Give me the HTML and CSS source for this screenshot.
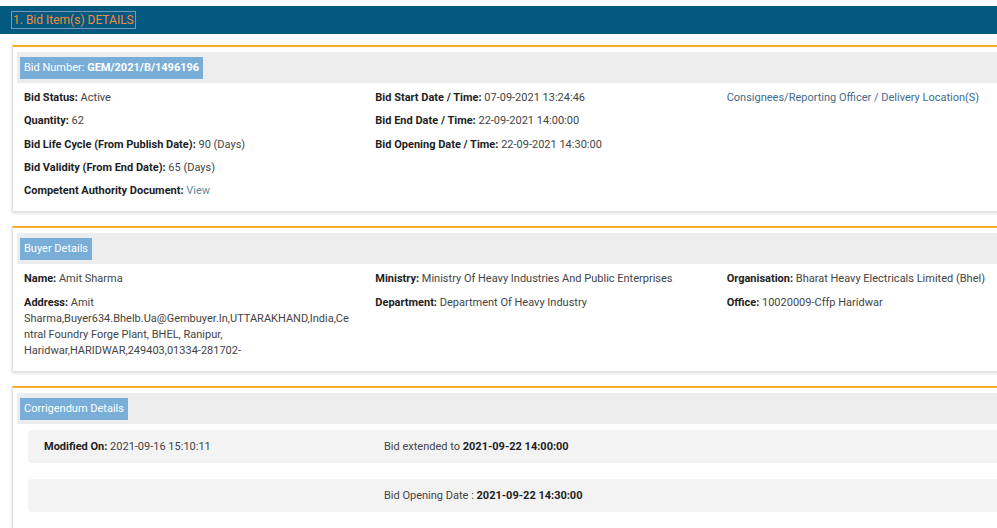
FILE: index.html
```html
<!DOCTYPE html>
<html>
<head>
<meta charset="utf-8">
<link rel="stylesheet" href="styles.css">
</head>
<body>
<div class="page">
  <div class="topbar"><span class="topbar-title">1. Bid Item(s) DETAILS</span></div>
  <div class="panels">
    <section class="card">
      <div class="card-head"><span class="badge">Bid Number: <b>GEM/2021/B/1496196</b></span></div>
      <div class="cols">
        <div class="col">
          <p class="item"><b>Bid Status:</b> Active</p>
          <p class="item"><b>Quantity:</b> 62</p>
          <p class="item"><b>Bid Life Cycle (From Publish Date):</b> 90 (Days)</p>
          <p class="item"><b>Bid Validity (From End Date):</b> 65 (Days)</p>
          <p class="item"><b>Competent Authority Document:</b> <a class="link">View</a></p>
        </div>
        <div class="col">
          <p class="item"><b>Bid Start Date / Time:</b> 07-09-2021 13:24:46</p>
          <p class="item"><b>Bid End Date / Time:</b> 22-09-2021 14:00:00</p>
          <p class="item"><b>Bid Opening Date / Time:</b> 22-09-2021 14:30:00</p>
        </div>
        <div class="col">
          <p class="item"><a class="link consignee">Consignees/Reporting Officer / Delivery Location(S)</a></p>
        </div>
      </div>
    </section>

    <section class="card">
      <div class="card-head"><span class="badge">Buyer Details</span></div>
      <div class="cols">
        <div class="col">
          <p class="item"><b>Name:</b> Amit Sharma</p>
          <p class="item address"><b>Address:</b> Amit Sharma,Buyer634.Bhelb.Ua@Gembuyer.In,UTTARAKHAND,India,Central Foundry Forge Plant, BHEL, Ranipur, Haridwar,HARIDWAR,249403,01334-281702-</p>
        </div>
        <div class="col">
          <p class="item"><b>Ministry:</b> Ministry Of Heavy Industries And Public Enterprises</p>
          <p class="item"><b>Department:</b> Department Of Heavy Industry</p>
        </div>
        <div class="col">
          <p class="item"><b>Organisation:</b> Bharat Heavy Electricals Limited (Bhel)</p>
          <p class="item"><b>Office:</b> 10020009-Cffp Haridwar</p>
        </div>
      </div>
    </section>

    <section class="card last">
      <div class="card-head"><span class="badge">Corrigendum Details</span></div>
      <div class="corr">
        <div class="corr-row">
          <div class="corr-col"><b>Modified On:</b> 2021-09-16 15:10:11</div>
          <div class="corr-col">Bid extended to <b>2021-09-22 14:00:00</b></div>
        </div>
        <div class="corr-row">
          <div class="corr-col"></div>
          <div class="corr-col">Bid Opening Date : <b>2021-09-22 14:30:00</b></div>
        </div>
      </div>
    </section>
  </div>
</div>
</body>
</html>
```

FILE: styles.css
```css
html, body {
  margin: 0;
  padding: 0;
  overflow: hidden;
  background: #ffffff;
}

body {
  font-family: Roboto, "Liberation Sans", sans-serif;
  font-size: 11px;
  color: #444;
}

.page {
  padding-top: 6px;
}

.topbar {
  background: #05587f;
  height: 28px;
  display: flex;
  align-items: center;
  padding-left: 12px;
}

.topbar-title {
  color: #ee8c3f;
  font-size: 12px;
  line-height: 16px;
  padding: 0 1px;
  outline: 1px solid #6f9bbb;
}

.panels {
  width: 1064px;
  margin-left: 12px;
  padding-top: 11px;
}

.card {
  border: 1px solid #e2e2e2;
  border-top: 2px solid #f2b02b;
  box-shadow: 0 1px 3px rgba(0, 0, 0, 0.16);
  padding: 5px 4px 5px;
  margin-bottom: 14px;
  background: #fff;
}

.card.last {
  padding-bottom: 30px;
}

.card-head {
  background: #ededed;
  padding: 5px 3px 4px;
  display: flex;
}

.badge {
  background: #79aed9;
  color: #fff;
  font-size: 11px;
  line-height: 22px;
  padding: 0 4px;
}

.badge b {
  font-weight: 700;
}

.cols {
  display: grid;
  grid-template-columns: minmax(0, 1fr) minmax(0, 1fr) minmax(0, 1fr);
  padding-top: 7px;
}

.col {
  min-width: 0;
  padding: 0 14px 0 7px;
}

.item {
  margin: 0 0 7.3px;
  line-height: 16px;
  color: #444;
}

.item b {
  color: #1e1e1e;
  font-weight: 700;
}

.address {
  overflow-wrap: break-word;
  line-height: 16px;
}

.link {
  color: #5f8aa6;
  text-decoration: none;
}

.consignee {
  color: #3f6b8c;
}

.corr {
  padding: 6px 11px 0;
  display: flex;
  flex-direction: column;
  gap: 16px;
}

.corr-row {
  background: #f3f3f3;
  border-radius: 4px;
  height: 33px;
  display: grid;
  grid-template-columns: 340px 1fr;
  align-items: center;
  padding-left: 16px;
  color: #444;
}

.corr-col b {
  color: #1e1e1e;
  font-weight: 700;
}
```
